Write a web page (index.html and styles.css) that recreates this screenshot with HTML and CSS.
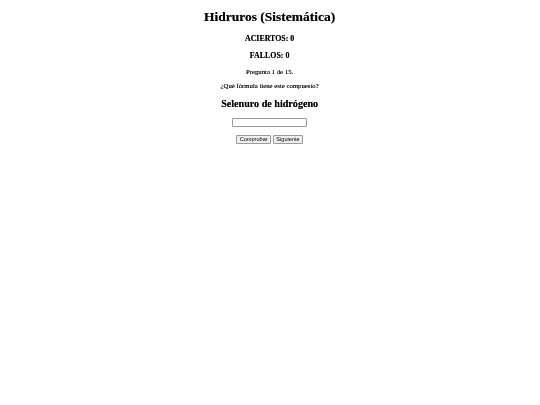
FILE: index.html
```html
<!DOCTYPE html>
<html lang="es">
<head>
<meta charset="utf-8">
<title>Hidruros (Sistemática)</title>
<link rel="stylesheet" href="styles.css">
</head>
<body>
<div class="page">
  <h1 class="title">Hidruros (Sistemática)</h1>
  <h3 class="score">ACIERTOS: 0</h3>
  <h3 class="score">FALLOS: 0</h3>
  <p class="info">Pregunta 1 de 15.</p>
  <p class="info">¿Qué fórmula tiene este compuesto?</p>
  <h2 class="compound">Selenuro de hidrógeno</h2>
  <p class="answer"><input type="text" class="answer-input"></p>
  <p class="actions"><button class="btn">Comprobar</button> <button class="btn">Siguiente</button></p>
</div>
</body>
</html>
```
FILE: styles.css
```css
html {
  background: #ffffff;
}
body {
  margin: 0 3.375px 3.375px;
  font-family: "Liberation Serif", "Times New Roman", serif;
  color: #000000;
}
.page {
  text-align: center;
  padding-top: 9px;
  will-change: transform;
  background: #ffffff;
  text-shadow: 0 0 0.4px rgba(0, 0, 0, 0.6);
}
.title {
  font-size: 13.5px;
  margin: 0 0 9px;
}
.score {
  font-size: 7.9px;
  margin: 1em 0;
}
.info {
  font-size: 6.75px;
  margin: 1em 0;
}
.compound {
  font-size: 10.125px;
  margin: 9px 0 8px;
}
.answer {
  font-size: 6.75px;
  margin: 9px 0 7px;
  line-height: 9px;
}
.actions {
  font-size: 6.75px;
  margin: 7px 0;
  line-height: 9px;
}
.answer-input {
  box-sizing: border-box;
  width: 75px;
  height: 9px;
  padding: 0;
  border: 1px solid #999999;
  border-radius: 1px;
  background: #ffffff;
  vertical-align: middle;
}
.btn {
  box-sizing: border-box;
  height: 9px;
  padding: 0 2.5px;
  font-family: "Liberation Sans", Arial, sans-serif;
  font-size: 5.6px;
  line-height: 7px;
  color: #000000;
  background: #efefef;
  border: 1px solid #999999;
  border-radius: 1px;
  vertical-align: middle;
}
```
